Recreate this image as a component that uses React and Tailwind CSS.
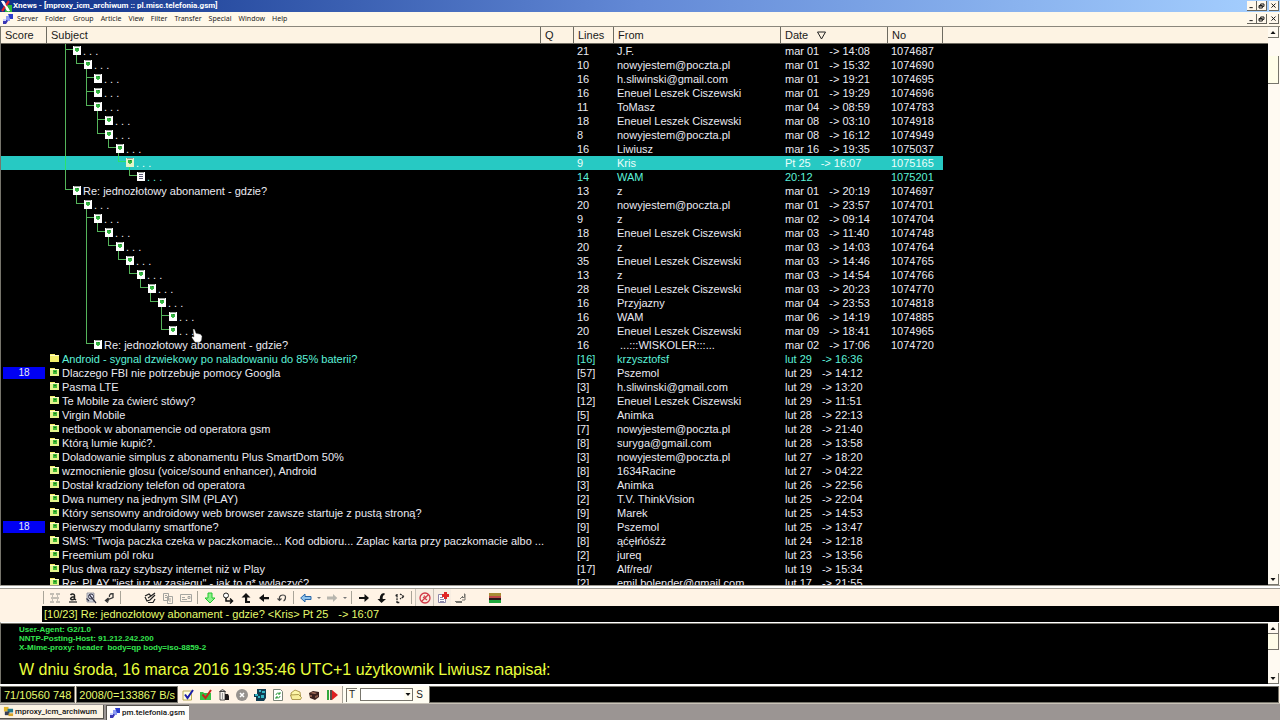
import React from "react";

const LEVEL_X = [25, 36, 46, 57, 68, 78, 89, 100, 110, 121];

const DOTS = ". . .";
const RE = "Re: jednozłotowy abonament - gdzie?";

const THREAD = [
  { d: 0, s: DOTS, l: "21", f: "J.F.", t: "mar 01", h: "14:08", n: "1074687" },
  { d: 1, s: DOTS, l: "10", f: "nowyjestem@poczta.pl", t: "mar 01", h: "15:32", n: "1074690" },
  { d: 2, s: DOTS, l: "16", f: "h.sliwinski@gmail.com", t: "mar 01", h: "19:21", n: "1074695" },
  { d: 2, s: DOTS, l: "16", f: "Eneuel Leszek Ciszewski", t: "mar 01", h: "19:29", n: "1074696" },
  { d: 2, s: DOTS, l: "11", f: "ToMasz", t: "mar 04", h: "08:59", n: "1074783" },
  { d: 3, s: DOTS, l: "18", f: "Eneuel Leszek Ciszewski", t: "mar 08", h: "03:10", n: "1074918" },
  { d: 3, s: DOTS, l: "8", f: "nowyjestem@poczta.pl", t: "mar 08", h: "16:12", n: "1074949" },
  { d: 4, s: DOTS, l: "16", f: "Liwiusz", t: "mar 16", h: "19:35", n: "1075037" },
  { d: 5, s: DOTS, l: "9", f: "Kris", t: "Pt 25", h: "16:07", n: "1075165", selected: true },
  { d: 6, s: DOTS, l: "14", f: "WAM", t: "20:12", h: "", n: "1075201", unread: true },
  { d: 0, s: RE, l: "13", f: "z", t: "mar 01", h: "20:19", n: "1074697" },
  { d: 1, s: DOTS, l: "20", f: "nowyjestem@poczta.pl", t: "mar 01", h: "23:57", n: "1074701" },
  { d: 2, s: DOTS, l: "9", f: "z", t: "mar 02", h: "09:14", n: "1074704" },
  { d: 3, s: DOTS, l: "18", f: "Eneuel Leszek Ciszewski", t: "mar 03", h: "11:40", n: "1074748" },
  { d: 4, s: DOTS, l: "20", f: "z", t: "mar 03", h: "14:03", n: "1074764" },
  { d: 5, s: DOTS, l: "35", f: "Eneuel Leszek Ciszewski", t: "mar 03", h: "14:46", n: "1074765" },
  { d: 6, s: DOTS, l: "13", f: "z", t: "mar 03", h: "14:54", n: "1074766" },
  { d: 7, s: DOTS, l: "28", f: "Eneuel Leszek Ciszewski", t: "mar 03", h: "20:23", n: "1074770" },
  { d: 8, s: DOTS, l: "16", f: "Przyjazny", t: "mar 04", h: "23:53", n: "1074818" },
  { d: 9, s: DOTS, l: "16", f: "WAM", t: "mar 06", h: "14:19", n: "1074885" },
  { d: 9, s: DOTS, l: "20", f: "Eneuel Leszek Ciszewski", t: "mar 09", h: "18:41", n: "1074965", cursor: true },
  { d: 2, s: RE, l: "16", f: " ...:::WISKOLER:::...", t: "mar 02", h: "17:06", n: "1074720" },
];

const TOPICS = [
  { s: "Android - sygnal dzwiekowy po naladowaniu do 85% baterii?", l: "[16]", f: "krzysztofsf", t: "lut 29", h: "16:36", unread: true },
  { s: "Dlaczego FBI nie potrzebuje pomocy Googla", l: "[57]", f: "Pszemol", t: "lut 29", h: "14:12", score: "18" },
  { s: "Pasma LTE", l: "[3]", f: "h.sliwinski@gmail.com", t: "lut 29", h: "13:20" },
  { s: "Te Mobile za ćwierć stówy?", l: "[12]", f: "Eneuel Leszek Ciszewski", t: "lut 29", h: "11:51" },
  { s: "Virgin Mobile", l: "[5]", f: "Animka", t: "lut 28", h: "22:13" },
  { s: "netbook w abonamencie od operatora gsm", l: "[7]", f: "nowyjestem@poczta.pl", t: "lut 28", h: "21:40" },
  { s: "Którą lumie kupić?.", l: "[8]", f: "suryga@gmail.com", t: "lut 28", h: "13:58" },
  { s: "Doladowanie simplus z abonamentu Plus SmartDom 50%", l: "[3]", f: "nowyjestem@poczta.pl", t: "lut 27", h: "18:20" },
  { s: "wzmocnienie glosu (voice/sound enhancer), Android", l: "[8]", f: "1634Racine", t: "lut 27", h: "04:22" },
  { s: "Dostał kradziony telefon od operatora", l: "[3]", f: "Animka", t: "lut 26", h: "22:56" },
  { s: "Dwa numery na jednym SIM (PLAY)", l: "[2]", f: "T.V. ThinkVision", t: "lut 25", h: "22:04" },
  { s: "Który sensowny androidowy web browser zawsze startuje z pustą stroną?", l: "[9]", f: "Marek", t: "lut 25", h: "14:53" },
  { s: "Pierwszy modularny smartfone?", l: "[9]", f: "Pszemol", t: "lut 25", h: "13:47", score: "18" },
  { s: "SMS: \"Twoja paczka czeka w paczkomacie... Kod odbioru... Zaplac karta przy paczkomacie albo ...", l: "[8]", f: "ąćęłńóśźż", t: "lut 24", h: "12:18" },
  { s: "Freemium pól roku", l: "[2]", f: "jureq", t: "lut 23", h: "13:56" },
  { s: "Plus dwa razy szybszy internet niż w Play", l: "[17]", f: "Alf/red/", t: "lut 19", h: "15:34" },
  { s: "Re: PLAY \"jest juz w zasięgu\" - jak to g* wylączyć?", l: "[2]", f: "emil.bolender@gmail.com", t: "lut 17", h: "21:55" },
];

// Does another entry at `depth` follow before the branch closes?
function continues(index, depth) {
  for (let i = index + 1; i < THREAD.length; i++) {
    if (THREAD[i].d < depth) return false;
    if (THREAD[i].d === depth) return true;
  }
  return false;
}

function TreeGlyph({ index }) {
  const row = THREAD[index];
  const x = LEVEL_X[row.d];
  const color = row.selected ? "#2be36a" : "#54b45a";
  const through = [];
  for (let k = 0; k < row.d; k++) if (continues(index, k)) through.push(LEVEL_X[k] - 7);
  const last = !continues(index, row.d);
  const hasChild = THREAD[index + 1] && THREAD[index + 1].d > row.d;
  return (
    <svg width={x + 11} height="14" className="block shrink-0" aria-hidden="true" shapeRendering="crispEdges">
      {through.map((v) => <rect key={v} x={v} y="0" width="1" height="14" fill={color} />)}
      <rect x={x - 7} y="0" width="1" height={last ? 6 : 14} fill={color} />
      <rect x={x - 7} y="5" width="8" height="1" fill={color} />
      {hasChild && <rect x={LEVEL_X[row.d + 1] - 7} y="11" width="1" height="3" fill={color} />}
      <rect x={x + 1} y="2" width="8" height="9" fill={row.selected ? "#e6f5c8" : "#ffffff"} />
      <rect x={x + 2} y="2" width="6" height="1" fill="#9aa09a" />
      {row.unread ? (
        <g fill="#5c5c74">
          <rect x={x + 3} y="4" width="4" height="1" />
          <rect x={x + 3} y="6" width="4" height="1" />
          <rect x={x + 3} y="8" width="4" height="1" />
        </g>
      ) : (
        <g>
          <rect x={x + 3} y="4" width="4" height="3" fill="#34b541" />
          <rect x={x + 4} y="7" width="2" height="1" fill="#4cc458" />
          <rect x={x + 5} y="4" width="1" height="1" fill="#1c7f2a" />
        </g>
      )}
    </svg>
  );
}

function Folder({ plain }) {
  return (
    <svg width="12" height="14" className="block shrink-0" aria-hidden="true" shapeRendering="crispEdges">
      <path d="M0 2h4l1 1h4v7H0z" fill="#f4ee6a" />
      <path d="M0 3h9v1H0z" fill="#fffbc4" />
      {!plain && <path d="M0 4h9v6H0z" fill="#e4f48c" />}
      {!plain && <path d="M3 4h4v4H3z" fill="#45bd36" />}
      {!plain && <path d="M4 5h2v1H4z" fill="#1d7d22" />}
    </svg>
  );
}

function Hand() {
  return (
    <svg width="12" height="14" viewBox="0 0 12 14" className="pointer-events-none absolute left-[144px] top-[5px] z-10" aria-hidden="true">
      <path d="M2 0l1.500.3 1.500 4 4.500 1 1.500 2-.5 4-1.500 2H4L.8 8.500l.7-1L3 8z" fill="#fff" stroke="#555" strokeWidth=".4" />
    </svg>
  );
}

function MessageRow({ row, children }) {
  const tone = row.selected ? "text-[#ecfffb]" : row.unread ? "text-[#5cf0d8]" : "text-[#eaeaf2]";
  const bg = row.selected ? "bg-[#27c9c3]" : "";
  return (
    <tr className={tone}>
      <td className={"h-[14px] p-0 " + bg}>
        {row.score && <div className="mx-[2px] h-3 bg-[#0000f4] text-center text-[10px] leading-3">{row.score}</div>}
      </td>
      <td className={"relative p-0 " + bg}>
        <div className="flex whitespace-pre">{children}</div>
        {row.cursor && <Hand />}
      </td>
      <td className={"p-0 " + bg} />
      <td className={"p-0 pl-[3px] " + bg}>{row.l}</td>
      <td className={"p-0 pl-[3px] whitespace-pre " + bg}>{row.f}</td>
      <td className={"p-0 " + bg}>
        <span className="flex gap-[10px] pl-1 whitespace-pre">
          <span>{row.t}</span>
          {row.h && <span>{"-> " + row.h}</span>}
        </span>
      </td>
      <td className={"p-0 pl-[3px] " + bg}>{row.n}</td>
      <td className="p-0" />
    </tr>
  );
}

function Th({ children }) {
  return (
    <th scope="col" className="h-[17px] border-r border-b border-[#6d6a60] p-0 pl-1 text-left font-normal">
      {children}
    </th>
  );
}

function Arrow({ up }) {
  return (
    <svg width="6" height="3" viewBox="0 0 6 3" aria-hidden="true">
      <path d={up ? "M3 0L5.500 3h-5z" : "M.5 0h5L3 3z"} fill="#111" />
    </svg>
  );
}

function ScrollBar({ label, thumb }) {
  const btn = "flex h-[11px] w-full shrink-0 items-center justify-center border-r border-b border-[#77756c] bg-[#fffaf0]";
  return (
    <div className="flex w-3 shrink-0 flex-col bg-[#fffaf2] pr-px" role="group" aria-label={label}>
      <button type="button" aria-label="Scroll up" className={btn}><Arrow up /></button>
      <div className="flex-1">
        <div className={"border-r border-b border-[#77756c] bg-[#fffde8] " + thumb} />
      </div>
      <button type="button" aria-label="Scroll down" className={btn}><Arrow /></button>
    </div>
  );
}

const WIN = {
  Minimize: <path d="M3 7h4" />,
  Restore: <path d="M4.500 4V2.500h4v3H7M2.500 4.500h4v3h-4zM2.500 5h4" />,
  Close: <path d="M3 2l5 5M8 2L3 7" />,
};

function WindowButtons({ target }) {
  return (
    <div className="flex pr-px">
      {Object.keys(WIN).map((name) => (
        <button
          key={name}
          type="button"
          aria-label={name + " " + target}
          className={"flex h-[10px] w-[10px] items-center justify-center border-r border-b border-[#66645c] bg-[#fff8ec] " + (name === "Close" ? "ml-[2px]" : "")}
        >
          <svg width="10" height="10" viewBox="0 0 11 10" fill="none" stroke="#111" strokeWidth="1.2" aria-hidden="true">{WIN[name]}</svg>
        </button>
      ))}
    </div>
  );
}

function PuzzleLogo() {
  return (
    <svg width="12" height="12" viewBox="0 0 12 12" aria-hidden="true">
      <path d="M4 3h4v5H4z" fill="#8d9af2" />
      <path d="M6 1h5v5H8z" fill="#2b3ccc" />
      <path d="M1 7h4l1 1-2 3H1z" fill="#3a36b4" />
      <path d="M1 6h3v2H1z" fill="#c9d0ff" />
    </svg>
  );
}

const ICONS = {
  "Split lines": <path d="M1 2h4M7 2h4M2 6h8M1 10h4M7 10h4M3 4h1M8 4h1M3 8h1M8 8h1" stroke="#8a8a84" strokeWidth="1.2" />,
  Font: <g stroke="#222" fill="none"><path d="M3.500 3c1-1.300 4-1.300 4 .5v4M7.500 4.700c-4-.2-5 3-2.500 3 1.500 0 2.500-1 2.500-1.500M7.500 7l1.500 1" strokeWidth="1.500" /><path d="M2 10h8" strokeWidth="1.200" /></g>,
  "Find text": <g><path d="M2 1h7v9H2z" fill="#d4d6de" stroke="#8c8c98" strokeWidth=".8" /><circle cx="6" cy="4.500" r="2.500" fill="#eef" stroke="#334" /><path d="M4.500 3l6.500 8M1.500 6.500L4 9" stroke="#334" strokeWidth="1.200" /></g>,
  "Wrap text": <path d="M10 1v4.500L4 8M5.500 6L2.500 8.500 5 10.500M9.500 2C7.500 1 6 3 6.500 5M3 8l3 1" stroke="#333" strokeWidth="1.300" fill="none" />,
  Compose: <path d="M1 4l4-2 2 2 4-3M1 5l2 4 3-1 5-5M4 6l3-2M4 10.500h5L11 7" stroke="#222" strokeWidth="1.200" fill="none" />,
  Copy: <path d="M1.500 1.500h5v7h-5zM5.500 4.500h5v7h-5zM3 3.500h2M3 5.500h2M7 7h2M7 9h2" stroke="#a5a5a0" fill="none" />,
  Mail: <path d="M.5 2.500h11v7H.5zM2 5.500h3M2 7.500h5M8 4.500h2v2H8z" stroke="#a5a5a0" fill="none" />,
  "Next unread": <path d="M4 1h4v5h3l-5 5-5-5h3z" fill="#8df08a" stroke="#23c62f" />,
  "Next in thread": <g><circle cx="4" cy="3.500" r="2.500" fill="#fff" stroke="#222" /><path d="M4 6v3h6M8 6.500L10.500 9 8 11.500" stroke="#111" strokeWidth="1.500" fill="none" /></g>,
  "Thread up": <path d="M6 1l4.500 4.500H7.200V9H10v2H5V5.500H1.500z" fill="#111" />,
  "Previous message": <path d="M1 6l5-4v3h5v2.200H6V10z" fill="#111" />,
  Undo: <path d="M3.500 8.500V5c1-2.700 6-2.700 6 0 0 2.500-.5 3.500-2 3.800M1.500 6.500l2 2 2-2" stroke="#444" strokeWidth="1.200" fill="none" />,
  Back: <path d="M.7 6l4.300-4v2.500h6v3H5V10z" fill="#8fc3ec" stroke="#2866a8" />,
  Forward: <path d="M11.300 6L7 2v2.500H1v3h6V10z" fill="#b8b6ae" />,
  "Next message": <path d="M11 6L6.500 2v3H1v2h5.500v3z" fill="#111" />,
  "Next thread": <path d="M5.500 11L1.500 7h2.300C3.800 4 5 1 8.500 1v2C7 3 6.500 5 6.700 7H10z" fill="#111" />,
  "Skip thread": <path d="M3 11V2M1.500 3.500h2M3 10.500h3M6 2l4 2.500L6 7" stroke="#222" strokeWidth="1.300" strokeDasharray="2 .7" fill="none" />,
  "Kill thread": <g fill="none" stroke="#d23a48"><circle cx="6" cy="6" r="5" strokeWidth="1.300" /><path d="M2.500 9.500L9.500 2.500M4 5l4 3M5 3.500L7 6" strokeWidth="1.200" /></g>,
  "Add rule": <g><path d="M1.500 2.500h7v8h-7zM3 5.500h3M3 7.500h4M3 9.500h4" fill="#fff" stroke="#8b86a8" /><path d="M7 0h3v2h2v3h-2v2H7V5H5V2h2z" fill="#e02626" /></g>,
  Hide: <path d="M1 9.500h7M10.500 1.500v4h-3M11 2v6H8M2 10.500h6M6 7l3-3" stroke="#77756f" fill="none" />,
  Colors: <g><path d="M0 1h12v3H0z" fill="#a88c34" /><path d="M0 4h12v2H0z" fill="#c04848" /><path d="M0 6h12v2H0z" fill="#281818" /><path d="M0 8h12v3H0z" fill="#1fa83c" /></g>,
};

const STATUS_ICONS = {
  "Mark read": <g><path d="M1 2h8.500v9H1z" fill="#fffde0" stroke="#b9ab54" /><path d="M3 5.500l2.500 3.500L11 1" stroke="#1b1fa8" strokeWidth="2" fill="none" /></g>,
  "Mark all": <g><path d="M0 3h3l1 1h7v7H0z" fill="#35c043" /><path d="M2.500 5.500l3 3.500L11 1" stroke="#c4281c" strokeWidth="2" fill="none" /></g>,
  Trash: <g><path d="M2 2.500h5V11H2z" fill="#f2efe9" stroke="#333" strokeWidth=".8" /><path d="M1.500 2.500L4.500.5l3 2z" fill="#bbb" stroke="#333" strokeWidth=".8" /><path d="M7 5h3l1 2v4H7z" fill="#1d1a1a" /><path d="M4.500 4v6" stroke="#999" /></g>,
  Stop: <g><circle cx="6" cy="6" r="6" fill="#96928e" /><path d="M4 4l4 4M8 4L4 8" stroke="#fff" strokeWidth="1.500" /></g>,
  Save: <g><path d="M3 0h9v9l-2 3H2V8H0V5h3z" fill="#123c50" /><path d="M1 5h3v2H1zM5 1h2v2H5zM8 2h3v2H8zM4 7h2v2H4zM7 6h3v3H7z" fill="#35b7c4" /></g>,
  Refresh: <g><path d="M1.500.5h7l2 2v9h-9z" fill="#fff" stroke="#7c8478" /><path d="M4 6c0-2 2.500-2.500 4-1M8 3v2H6M8 7c0 2-2.500 2.500-4 1M4 10V8h2" stroke="#2c9a3a" fill="none" /></g>,
  Open: <g><path d="M1.500 8L1 4l4-3 5 2 .5 4z" fill="#fdf6a8" stroke="#9a8432" strokeWidth=".8" /><path d="M2 10.500L.5 6l8-.5 3 3-1 2z" fill="#f8ee9c" stroke="#9a8432" strokeWidth=".8" /></g>,
  Library: <g><path d="M1 4l4-2 6 1v5l-4 3-5-2z" fill="#3a201c" /><path d="M2 4l3-1 4 1-2 1z" fill="#a8705c" /><path d="M2 6h2v2H2zM7 7l3-1v2L7 9z" fill="#8a5a48" /></g>,
  Run: <g><path d="M1 1h2v10H1z" fill="#33a83c" /><path d="M4 1h2v10H4z" fill="#575048" /><path d="M6 1l6 5-6 5z" fill="#dd2020" /></g>,
};

function Tool({ name, set = ICONS, className = "" }) {
  return (
    <button type="button" aria-label={name} className={"flex h-[17px] w-[18px] shrink-0 items-center justify-center " + className}>
      <svg width="12" height="12" viewBox="0 0 12 12" aria-hidden="true">{set[name]}</svg>
    </button>
  );
}

function Drop({ label }) {
  return (
    <button type="button" aria-label={label} className="flex h-[17px] w-2 shrink-0 items-center justify-center">
      <svg width="4" height="2" aria-hidden="true"><path d="M0 0h4L2 2z" fill="#777" /></svg>
    </button>
  );
}

const Sep = () => <span className="mr-[3px] ml-[2px] h-[13px] w-px shrink-0 bg-[#a9a498]" />;

const MENU = ["Server", "Folder", "Group", "Article", "View", "Filter", "Transfer", "Special", "Window", "Help"];

export default function App() {
  return (
    <div className="flex h-screen flex-col overflow-hidden bg-[#fff6e8] font-['Liberation_Sans',Arial,sans-serif] text-[11px] leading-[14px]">
      <header className="flex h-3 shrink-0 items-center justify-between bg-linear-to-r from-[#0f2f88] via-[#6389d6] to-[#a6d0ff]">
        <div className="flex items-center">
          <svg width="12" height="12" viewBox="0 0 12 12" aria-hidden="true">
            <path d="M6 5h6v7H5z" fill="#2fb83a" />
            <path d="M1 1h3l6 10H7z" fill="#fff" />
            <path d="M9 1L2 11" stroke="#e0242c" strokeWidth="2.200" />
            <path d="M2 1l7 10" stroke="#fff" strokeWidth="1.800" />
          </svg>
          <h1 className="pl-px font-['Roboto',sans-serif] text-[8px] leading-3 font-bold whitespace-nowrap text-white">
            Xnews - [mproxy_icm_archiwum :: pl.misc.telefonia.gsm]
          </h1>
        </div>
        <WindowButtons target="application" />
      </header>

      <nav className="flex h-[15px] shrink-0 items-center justify-between border-b border-[#8b877c] bg-[#fff8e9]">
        <div className="flex items-center gap-[3px] pl-[2px] font-['Noto_Sans',sans-serif] text-[7px] leading-3 text-[#222]">
          <PuzzleLogo />
          <div className="flex gap-[7px]">
            {MENU.map((m) => <button key={m} type="button">{m}</button>)}
          </div>
        </div>
        <WindowButtons target="group" />
      </nav>

      <main className="flex min-h-0 flex-1 border-l border-[#77756c]">
        <div className="min-w-0 flex-1 overflow-hidden bg-black">
          <table className="w-full table-fixed border-separate border-spacing-0">
            <colgroup>
              <col className="w-[46px]" />
              <col className="w-[494px]" />
              <col className="w-[33px]" />
              <col className="w-[40px]" />
              <col className="w-[167px]" />
              <col className="w-[107px]" />
              <col className="w-[55px]" />
              <col />
            </colgroup>
            <thead className="bg-[#fdf3e3] text-[#1a1a1a]">
              <tr>
                <Th>Score</Th>
                <Th>Subject</Th>
                <Th>Q</Th>
                <Th>Lines</Th>
                <Th>From</Th>
                <Th>
                  <span className="flex items-center gap-2">
                    Date
                    <svg width="11" height="9" viewBox="0 0 10 9" aria-label="descending"><path d="M1 1h8L5 8z" fill="none" stroke="#222" /></svg>
                  </span>
                </Th>
                <Th>No</Th>
                <td className="border-b border-[#6d6a60] p-0" />
              </tr>
            </thead>
            <tbody>
              {THREAD.map((row, i) => (
                <MessageRow key={row.n} row={row}>
                  <TreeGlyph index={i} />
                  <span>{row.s}</span>
                </MessageRow>
              ))}
              {TOPICS.map((row) => (
                <MessageRow key={row.s} row={row}>
                  <span className="pl-[3px]"><Folder plain={row.unread} /></span>
                  <span>{row.s}</span>
                </MessageRow>
              ))}
            </tbody>
          </table>
        </div>
        <ScrollBar label="Message list" thumb="mt-[18px] h-[28px]" />
      </main>

      <section className="shrink-0">
        <div className="border-t border-b border-t-[#a09c94] border-b-[#a09c94] bg-white pt-[2px]" />
        <div className="flex h-[17px] items-center bg-[#fff3e5] pl-[43px]">
          <span className="mr-[2px] h-[13px] w-px bg-[#a9a498]" />
          <Tool name="Split lines" />
          <Tool name="Font" />
          <Tool name="Find text" />
          <Tool name="Wrap text" />
          <Sep />
          <span className="w-[17px]" />
          <Tool name="Compose" />
          <Tool name="Copy" />
          <Tool name="Mail" />
          <Sep />
          <Tool name="Next unread" />
          <Tool name="Next in thread" />
          <Tool name="Thread up" />
          <Tool name="Previous message" />
          <Tool name="Undo" />
          <Sep />
          <Tool name="Back" />
          <Drop label="Back history" />
          <Tool name="Forward" />
          <Drop label="Forward history" />
          <Sep />
          <Tool name="Next message" />
          <Tool name="Next thread" />
          <Tool name="Skip thread" />
          <Sep />
          <Tool name="Kill thread" className="border-l border-[#c9c3b8] bg-[#f8eee2]" />
          <Tool name="Add rule" className="border-l border-[#c9c3b8] bg-[#f8eee2]" />
          <Tool name="Hide" />
          <span className="w-[17px]" />
          <Tool name="Colors" />
        </div>
        <div className="bg-[#fff3e5] pr-px pl-[42px]">
          <h2 className="flex h-4 gap-[10px] bg-black pl-[2px] leading-4 font-normal whitespace-pre text-[#e6fb6e]">
            <span>{"[10/23] Re: jednozłotowy abonament - gdzie? <Kris> Pt 25"}</span>
            <span>{"-> 16:07"}</span>
          </h2>
        </div>
      </section>

      <article className="flex h-[62px] shrink-0 border-t border-l border-t-white border-l-[#77756c] bg-black">
        <div className="min-w-0 flex-1 overflow-hidden border-t border-[#77756c] pl-[18px]">
          <div className="pt-px text-[8px] leading-[9px] font-bold whitespace-pre text-[#35e650]">
            <p>User-Agent: G2/1.0</p>
            <p>NNTP-Posting-Host: 91.212.242.200</p>
            <p>X-Mime-proxy: header  body=qp body=iso-8859-2</p>
          </div>
          <p className="pt-[9px] text-[16px] leading-[18px] whitespace-nowrap text-[#eaff3c]">
            W dniu środa, 16 marca 2016 19:35:46 UTC+1 użytkownik Liwiusz napisał:
          </p>
        </div>
        <ScrollBar label="Article" thumb="h-4" />
      </article>

      <footer className="shrink-0">
        <div className="flex h-5 border-t-2 border-b border-t-white border-b-[#c9c3b8] bg-[#fff3e5] text-[#e6fb6e]">
          <div className="border border-[#77756c] bg-black px-[3px] leading-4 whitespace-nowrap">71/10560 748</div>
          <div className="ml-px border border-[#77756c] bg-black px-[2px] leading-4 whitespace-nowrap">2008/0=133867 B/s</div>
          <div className="flex items-center border-r border-[#a9a498] pr-px pl-px">
            {Object.keys(STATUS_ICONS).map((n) => <Tool key={n} name={n} set={STATUS_ICONS} />)}
          </div>
          <div className="flex items-center bg-[#fffdf2] px-[3px] text-[10px] text-[#222]">
            <button type="button" className="h-[14px] w-[11px] border-t border-l border-[#77756c] leading-3">T</button>
            <select aria-label="Search" className="ml-[3px] h-[13px] w-[44px] appearance-none border border-r-0 border-[#77756c] bg-white" />
            <span className="flex h-[13px] w-[9px] items-center justify-center border border-l-0 border-[#77756c]"><Arrow /></span>
            <button type="button" className="w-[13px]">S</button>
          </div>
          <div className="mr-px flex-1 border border-[#77756c] bg-black" />
        </div>
        <div className="flex h-4 gap-[2px] bg-[#9b9593] pt-px font-['Roboto',sans-serif] text-[8px] leading-3 font-medium text-[#111]">
          <button type="button" className="flex h-[14px] w-[104px] items-center gap-px border-r border-b border-[#55524c] bg-[#fbf3e4] pl-[3px] whitespace-nowrap">
            <svg width="11" height="11" viewBox="0 0 12 12" aria-hidden="true">
              <path d="M1 1h5v5H1z" fill="#e4b52c" /><path d="M5 3h6v4H5z" fill="#237a8c" /><path d="M2 6h5v4H2z" fill="#363c52" /><path d="M6 8h5v3H6z" fill="#d8a428" />
            </svg>
            mproxy_icm_archiwum
          </button>
          <button type="button" aria-pressed="true" className="flex h-[15px] w-[83px] items-center gap-px border-t border-l border-[#55524c] bg-[#fffdfa] pl-[2px] whitespace-nowrap">
            <PuzzleLogo />
            pm.telefonia.gsm
          </button>
        </div>
      </footer>
    </div>
  );
}
